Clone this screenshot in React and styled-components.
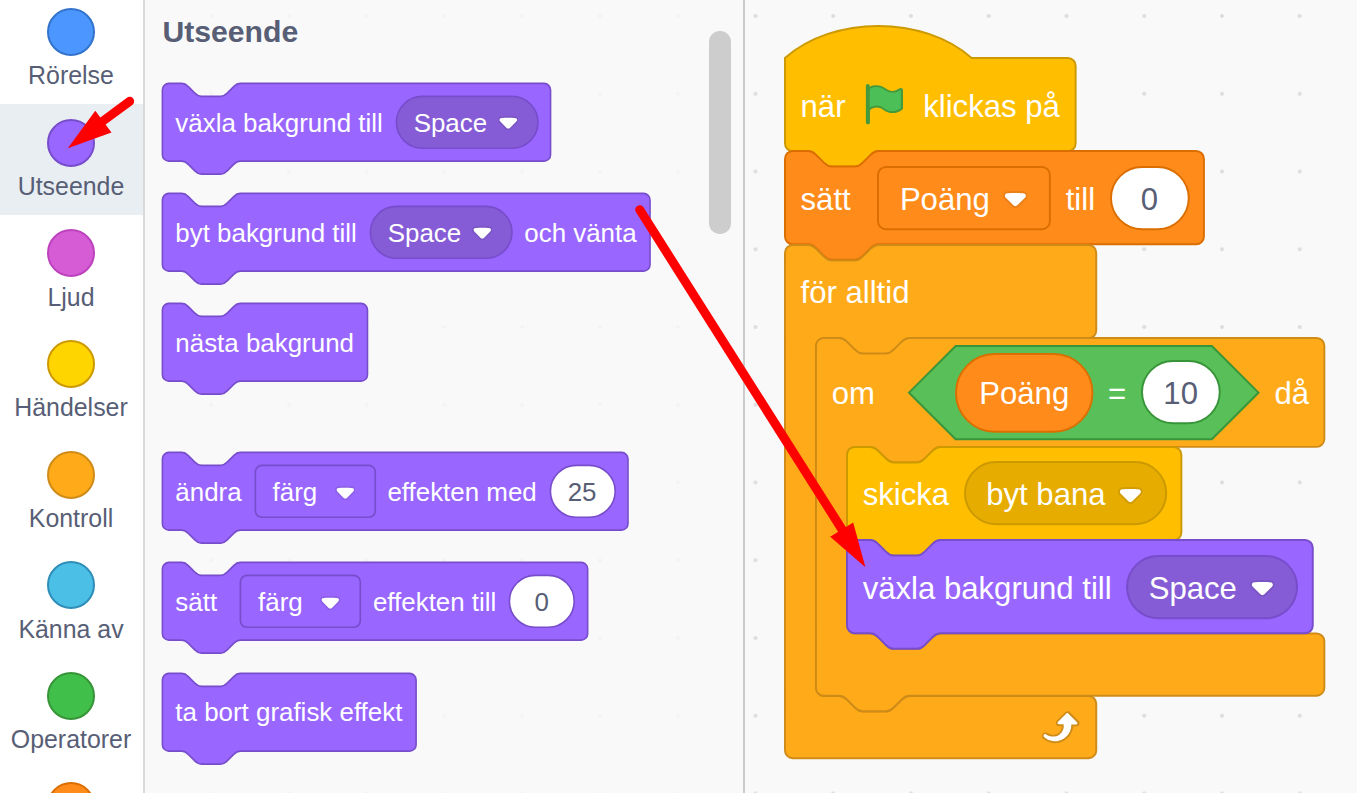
import React from "react";
import styled, { createGlobalStyle } from "styled-components";

const Global = createGlobalStyle`
  html, body { margin: 0; padding: 0; }
  body { background: #f9f9f9; font-family: "Liberation Sans", Arial, Helvetica, sans-serif; overflow: hidden; }
`;

const TEXT = "#575E75";

const PALETTE = {
  looks: { fill: "#9966FF", stroke: "#774DCB", menu: "#855CD6" },
  events: { fill: "#FFBF00", stroke: "#CC9900", menu: "#E6AC00" },
  control: { fill: "#FFAB19", stroke: "#CF8B17", menu: "#FFAB19" },
  data: { fill: "#FF8C1A", stroke: "#DB6E00", menu: "#FF8C1A" },
  operators: { fill: "#59C059", stroke: "#389438", menu: "#59C059" },
};

const CATEGORIES = [
  { name: "Rörelse", fill: "#4C97FF", stroke: "#3373CC" },
  { name: "Utseende", fill: "#9966FF", stroke: "#774DCB", selected: true },
  { name: "Ljud", fill: "#D65CD6", stroke: "#BD42BD" },
  { name: "Händelser", fill: "#FFD500", stroke: "#CC9900" },
  { name: "Kontroll", fill: "#FFAB19", stroke: "#CF8B17" },
  { name: "Känna av", fill: "#4CBFE6", stroke: "#2E8EB8" },
  { name: "Operatorer", fill: "#40BF4A", stroke: "#389438" },
  { name: "Variabler", fill: "#FF8C1A", stroke: "#DB6E00" },
];

/* ---------- page frame ---------- */

const Editor = styled.main`
  position: relative;
  display: flex;
  width: 1357px;
  height: 793px;
  overflow: hidden;
  background: radial-gradient(circle at center, #ddd 0 1.5px, rgba(221, 221, 221, 0) 2.3px) 716.6px -22.9px / 77.76px 77.76px #f9f9f9;
`;

const Sidebar = styled.nav`
  flex: none;
  box-sizing: border-box;
  width: 145px;
  height: 100%;
  overflow: hidden;
  background: #fff;
  border-right: 2px solid #d9d9d9;
`;

const CategoryList = styled.div`
  display: flex;
  flex-direction: column;
  margin-top: -6.7px;
`;

const Category = styled.div`
  flex: none;
  box-sizing: border-box;
  height: 110.65px;
  padding: 14.7px 1px 0 0;
  display: flex;
  flex-direction: column;
  align-items: center;
  background: ${(p) => (p.$selected ? "#E9EEF2" : "transparent")};
`;

const Bubble = styled.span`
  box-sizing: border-box;
  width: 48px;
  height: 48px;
  border-radius: 50%;
  background: ${(p) => p.$fill};
  border: 2px solid ${(p) => p.$stroke};
`;

const CategoryName = styled.span`
  margin-top: 5.3px;
  font-size: 24.9px;
  line-height: 29px;
  white-space: nowrap;
  color: ${TEXT};
`;

const Flyout = styled.section`
  --u: 1.62px;
  --drop: 1.1px;
  --nudge: 0.25px;
  position: relative;
  flex: none;
  box-sizing: border-box;
  width: 600px;
  height: 100%;
  padding: 14px 0 0 17.4px;
  background: rgba(249, 249, 249, 0.8);
  border-right: 2px solid #ccc;
`;

const Heading = styled.h2`
  margin: 0;
  height: 69px;
  font-size: 30.2px;
  line-height: 35px;
  font-weight: 700;
  color: ${TEXT};
`;

const Palette = styled.div`
  display: flex;
  flex-direction: column;
  align-items: flex-start;
  gap: ${(p) => p.$gap};
`;

const ScrollThumb = styled.div`
  position: absolute;
  top: 30.6px;
  right: 12px;
  width: 21.6px;
  height: 203.4px;
  border-radius: 10.8px;
  background: #cecdce;
`;

const Workspace = styled.section`
  --u: 1.944px;
  --drop: 2.2px;
  --nudge: 0px;
  flex: 1;
  min-width: 0;
  padding: 58.1px 0 0 40px;
`;

const Stack = styled.div`
  display: flex;
  flex-direction: column;
  align-items: flex-start;
`;

/* ---------- block parts ---------- */

/* Every part is one grid cell: its outline and its content share the cell. */
const Part = styled.div`
  flex: none;
  display: grid;
  grid-template-columns: minmax(0, 1fr);
  width: calc(${(p) => p.$w} * var(--u));
  height: calc(${(p) => p.$h} * var(--u));
  color: ${(p) => p.$color || "#fff"};
  font-size: calc(16 * var(--u));
  line-height: calc(20 * var(--u));
`;

const Outline = styled.svg`
  grid-area: 1 / 1;
  display: block;
  width: 100%;
  height: calc(${(p) => p.$h} * var(--u));
  overflow: visible;

  & > path {
    transform: translate(var(--nudge), var(--nudge));
  }
`;

const Body = styled.div`
  grid-area: 1 / 1;
  display: flex;
  flex-direction: column;
`;

const Row = styled.div`
  grid-area: 1 / 1;
  flex: none;
  box-sizing: border-box;
  height: calc(${(p) => p.$h || 48} * var(--u));
  padding: 0 calc(8 * var(--u));
  display: flex;
  align-items: center;
  gap: calc(8 * var(--u));
`;

const Footer = styled(Row)`
  justify-content: flex-end;
`;

const FieldRow = styled(Row)`
  padding: 0;
  justify-content: center;
`;

const MenuRow = styled(Row)`
  padding: 0 calc(11.7 * var(--u)) 0 calc(11.1 * var(--u));
  justify-content: space-between;
  gap: 0;
`;

const ConditionRow = styled(Row)`
  padding: 0 calc(20 * var(--u)) 0 calc(24 * var(--u));
`;

const Mouth = styled.div`
  padding-left: calc(16 * var(--u));
`;

const Label = styled.span`
  flex: none;
  padding-top: calc(2 * var(--drop));
  white-space: nowrap;
  min-width: calc(${(p) => p.$w || 0} * var(--u));
`;

const Icon = styled.svg`
  flex: none;
  width: calc(${(p) => p.$w} * var(--u));
  height: calc(${(p) => p.$h} * var(--u));
`;

const MenuArrow = styled(Icon)`
  margin-top: calc(1.9 * var(--u));
`;

const Arrows = styled.svg`
  position: absolute;
  inset: 0;
  width: 100%;
  height: 100%;
  pointer-events: none;
`;

/* ---------- outlines, in block units ---------- */

const NOTCH = "c 2,0 3,1 4,2 l 4,4 c 1,1 2,2 4,2 h 12 c 2,0 3,-1 4,-2 l 4,-4 c 1,-1 2,-2 4,-2";
const TAB = "c -2,0 -3,1 -4,2 l -4,4 c -1,1 -2,2 -4,2 h -12 c -2,0 -3,-1 -4,-2 l -4,-4 c -1,-1 -2,-2 -4,-2";
const TOP = `M 0,4 A 4,4 0 0,1 4,0 H 12 ${NOTCH}`;
const HAT = "M 0,0 c 25,-22 71,-22 96,0";

const stackPath = (w, hat) =>
  `${hat ? HAT : TOP} H ${w - 4} a 4,4 0 0,1 4,4 v 40 a 4,4 0 0,1 -4,4 H 48 ${TAB} H 4 a 4,4 0 0,1 -4,-4 z`;

const mouthPath = (w, head, mouth, tail) =>
  `${TOP} H ${w - 4} a 4,4 0 0,1 4,4 v ${head - 8} a 4,4 0 0,1 -4,4 H 64 ${TAB} h -8 a 4,4 0 0,0 -4,4 v ${mouth - 8}` +
  ` a 4,4 0 0,0 4,4 h 8 ${NOTCH} H ${w - 4} a 4,4 0 0,1 4,4 v 24 a 4,4 0 0,1 -4,4 ${tail ? `H 48 ${TAB}` : ""} H 4 a 4,4 0 0,1 -4,-4 z`;

const roundPath = (w, h, r) =>
  `M ${r},0 H ${w - r} a ${r},${r} 0 0,1 ${r},${r} V ${h - r} a ${r},${r} 0 0,1 ${-r},${r} H ${r} a ${r},${r} 0 0,1 ${-r},${-r} V ${r} a ${r},${r} 0 0,1 ${r},${-r} z`;

const hexPath = (w) => `M 24,0 H ${w - 24} l 24,24 l -24,24 H 24 l -24,-24 z`;

function Shape({ w, h, d, fill, stroke }) {
  return (
    <Outline $h={h} viewBox={`0 0 ${w} ${h}`} preserveAspectRatio="none" aria-hidden="true">
      <path d={d} fill={fill} stroke={stroke} strokeWidth="1" />
    </Outline>
  );
}

function Block({ kind, w, hat, children }) {
  const c = PALETTE[kind];
  return (
    <Part $w={w} $h={48}>
      <Shape w={w} h={48} d={stackPath(w, hat)} fill={c.fill} stroke={c.stroke} />
      <Row>{children}</Row>
    </Part>
  );
}

function MouthBlock({ w, head, mouth, tail, header, footer, children }) {
  const c = PALETTE.control;
  const h = head + mouth + 32;
  return (
    <Part $w={w} $h={h}>
      <Shape w={w} h={h} d={mouthPath(w, head, mouth, tail)} fill={c.fill} stroke={c.stroke} />
      <Body>
        <Row $h={head}>{header}</Row>
        <Mouth>{children}</Mouth>
        <Footer $h={32}>{footer}</Footer>
      </Body>
    </Part>
  );
}

function DropArrow() {
  return (
    <MenuArrow $w={12.71} $h={8.79} viewBox="0 0 12.71 8.79">
      <path fill="#231f20" opacity="0.1" d="M12.71,2.44A2.41,2.41,0,0,1,12,4.16L8.08,8.08a2.45,2.45,0,0,1-3.45,0L0.72,4.16A2.42,2.42,0,0,1,0,2.44,2.48,2.48,0,0,1,.71.71C1,0.47,1.43,0,6.36,0S11.75,0.46,12,.71A2.44,2.44,0,0,1,12.71,2.44Z" />
      <path fill="#fff" d="M6.36,7.79a1.43,1.43,0,0,1-1-.42L1.42,3.45a1.44,1.44,0,0,1,0-2c0.56-.56,9.31-0.56,9.87,0a1.44,1.44,0,0,1,0,2L7.37,7.37A1.43,1.43,0,0,1,6.36,7.79Z" />
    </MenuArrow>
  );
}

function Menu({ kind, w, square, children }) {
  const c = PALETTE[kind];
  return (
    <Part $w={w} $h={32}>
      <Shape w={w} h={32} d={roundPath(w, 32, square ? 4 : 16)} fill={square ? c.fill : c.menu} stroke={c.stroke} />
      <MenuRow $h={32}>
        <Label>{children}</Label>
        <DropArrow />
      </MenuRow>
    </Part>
  );
}

function NumberField({ kind, children }) {
  return (
    <Part $w={40} $h={32} $color={TEXT}>
      <Shape w={40} h={32} d={roundPath(40, 32, 16)} fill="#fff" stroke={PALETTE[kind].stroke} />
      <FieldRow $h={32}>
        <Label>{children}</Label>
      </FieldRow>
    </Part>
  );
}

function Reporter({ kind, w, children }) {
  const c = PALETTE[kind];
  return (
    <Part $w={w} $h={40}>
      <Shape w={w} h={40} d={roundPath(w, 40, 20)} fill={c.fill} stroke={c.stroke} />
      <FieldRow $h={40}>
        <Label>{children}</Label>
      </FieldRow>
    </Part>
  );
}

function Condition({ w, children }) {
  const c = PALETTE.operators;
  return (
    <Part $w={w} $h={48}>
      <Shape w={w} h={48} d={hexPath(w)} fill={c.fill} stroke={c.stroke} />
      <ConditionRow>{children}</ConditionRow>
    </Part>
  );
}

function GreenFlag() {
  return (
    <Icon $w={24} $h={24} viewBox="0 0 24 24">
      <path fill="#45993D" d="M20.8,3.7c-0.4-0.2-0.9-0.1-1.2,0.2c-2,1.6-4.8,1.6-6.8,0c-2.3-1.9-5.6-2.3-8.3-1v-0.4c0-0.6-0.5-1-1-1s-1,0.4-1,1v18.8c0,0.5,0.5,1,1,1h0.1c0.5,0,1-0.5,1-1v-6.4c1-0.7,2.1-1.2,3.4-1.3c1.2,0,2.4,0.4,3.4,1.2c2.9,2.3,7,2.3,9.8,0c0.3-0.2,0.4-0.5,0.4-0.9V4.7C21.6,4.2,21.3,3.8,20.8,3.7z" />
      <path fill="#4CBF56" d="M20.5,13.9C18,16,14.4,16,11.9,14c-1.1-0.9-2.5-1.4-4-1.4c-1.2,0.1-2.3,0.5-3.4,1.1V4c2.5-1.4,5.5-1.1,7.7,0.6c2.4,1.9,5.7,1.9,8.1,0h0.2c0,0,0,0,0,0.1V13.9z" />
    </Icon>
  );
}

function RepeatIcon() {
  return (
    <Icon $w={24} $h={24} viewBox="0 0 24 24">
      <path fill="#CF8B17" d="M23.3,11c-0.3,0.6-0.9,1-1.5,1h-1.6c-0.1,1.3-0.5,2.5-1.1,3.6c-0.9,1.7-2.3,3.2-4.1,4.1c-1.7,0.9-3.6,1.2-5.5,0.9c-1.8-0.3-3.5-1.1-4.9-2.3c-0.7-0.7-0.7-1.9,0-2.6c0.6-0.6,1.6-0.7,2.3-0.2H7c0.9,0.6,1.9,0.9,2.9,0.9s1.9-0.3,2.7-0.9c1.1-0.8,1.8-2.1,1.8-3.5h-1.5c-0.9,0-1.7-0.7-1.7-1.7c0-0.4,0.2-0.9,0.5-1.2l4.4-4.4c0.7-0.6,1.7-0.6,2.4,0L23,9.2C23.5,9.7,23.6,10.4,23.3,11z" />
      <path fill="#fff" d="M21.8,11h-2.6c0,1.5-0.3,2.9-1,4.2c-0.8,1.6-2.1,2.8-3.7,3.6c-1.5,0.8-3.3,1.1-4.9,0.8c-1.6-0.2-3.2-1-4.4-2.1c-0.4-0.3-0.4-0.9-0.1-1.2c0.3-0.4,0.9-0.4,1.2-0.1l0,0c1,0.7,2.2,1.1,3.4,1.1s2.3-0.3,3.3-1c0.9-0.6,1.6-1.5,2-2.6c0.3-0.9,0.4-1.8,0.2-2.8h-2.4c-0.4,0-0.7-0.3-0.7-0.7c0-0.2,0.1-0.3,0.2-0.4l4.4-4.4c0.3-0.3,0.7-0.3,0.9,0L22,9.8c0.3,0.3,0.4,0.6,0.3,0.9S22,11,21.8,11z" />
    </Icon>
  );
}

function PointerArrows() {
  return (
    <Arrows viewBox="0 0 1357 793" fill="#f00" stroke="#f00" strokeLinecap="round" strokeWidth="9">
      <path d="M129.6 101.3 L103 121" />
      <path d="M95.3 110.8 L111.5 132.5 L67.8 148.2 Z" stroke="none" />
      <path d="M639.7 209.7 L843 531" />
      <path d="M830.2 536.8 L853.2 522.6 L865.4 567.2 Z" stroke="none" />
    </Arrows>
  );
}

export default function App() {
  return (
    <>
      <Global />
      <Editor>
        <Sidebar>
          <CategoryList>
            {CATEGORIES.map((c) => (
              <Category key={c.name} $selected={c.selected}>
                <Bubble $fill={c.fill} $stroke={c.stroke} />
                {c.name !== "Variabler" && <CategoryName>{c.name}</CategoryName>}
              </Category>
            ))}
          </CategoryList>
        </Sidebar>

        <Flyout>
          <Heading>Utseende</Heading>
          <Palette $gap="71.2px">
            <Palette $gap="32.4px">
              <Block kind="looks" w={239.6}>
                <Label>växla bakgrund till</Label>
                <Menu kind="looks" w={87.4}>Space</Menu>
              </Block>
              <Block kind="looks" w={301}>
                <Label>byt bakgrund till</Label>
                <Menu kind="looks" w={87.4}>Space</Menu>
                <Label>och vänta</Label>
              </Block>
              <Block kind="looks" w={126.6}>
                <Label>nästa bakgrund</Label>
              </Block>
            </Palette>
            <Palette $gap="32.4px">
              <Block kind="looks" w={287.4}>
                <Label>ändra</Label>
                <Menu kind="looks" w={74} square>färg</Menu>
                <Label>effekten med</Label>
                <NumberField kind="looks">25</NumberField>
              </Block>
              <Block kind="looks" w={262.5}>
                <Label $w={32}>sätt</Label>
                <Menu kind="looks" w={74} square>färg</Menu>
                <Label>effekten till</Label>
                <NumberField kind="looks">0</NumberField>
              </Block>
              <Block kind="looks" w={156.6}>
                <Label>ta bort grafisk effekt</Label>
              </Block>
            </Palette>
          </Palette>
          <ScrollThumb />
        </Flyout>

        <Workspace>
          <Stack>
            <Block kind="events" w={149.5} hat>
              <Label>när</Label>
              <GreenFlag />
              <Label>klickas på</Label>
            </Block>
            <Block kind="data" w={215.5}>
              <Label $w={32}>sätt</Label>
              <Menu kind="data" w={88.4} square>Poäng</Menu>
              <Label>till</Label>
              <NumberField kind="data">0</NumberField>
            </Block>
            <MouthBlock w={160.1} head={48} mouth={184} header={<Label>för alltid</Label>} footer={<RepeatIcon />}>
              <MouthBlock
                w={261.5}
                head={56}
                mouth={96}
                tail
                header={
                  <>
                    <Label $w={32}>om</Label>
                    <Condition w={179.8}>
                      <Reporter kind="data" w={70.2}>Poäng</Reporter>
                      <Label>=</Label>
                      <NumberField kind="operators">10</NumberField>
                    </Condition>
                    <Label>då</Label>
                  </>
                }
              >
                <Stack>
                  <Block kind="events" w={172}>
                    <Label>skicka</Label>
                    <Menu kind="events" w={103.5}>byt bana</Menu>
                  </Block>
                  <Block kind="looks" w={239.6}>
                    <Label>växla bakgrund till</Label>
                    <Menu kind="looks" w={87.5}>Space</Menu>
                  </Block>
                </Stack>
              </MouthBlock>
            </MouthBlock>
          </Stack>
        </Workspace>

        <PointerArrows />
      </Editor>
    </>
  );
}
